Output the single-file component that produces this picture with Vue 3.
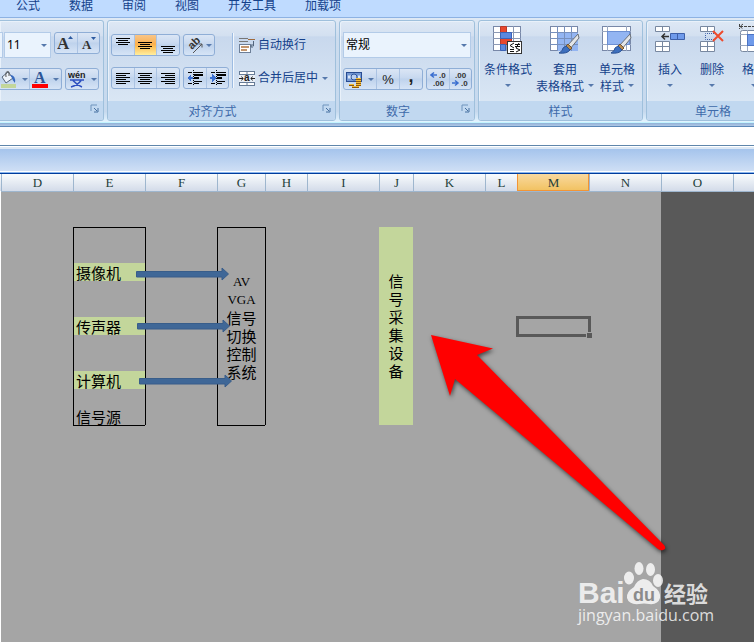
<script setup>
import { ref } from 'vue'

const tabs = ['公式', '数据', '审阅', '视图', '开发工具', '加载项']

const vertical = [
  { name: '顶端对齐', top: 2 },
  { name: '垂直居中', top: 6 },
  { name: '底端对齐', top: 10 }
]
const horizontal = [
  { name: '文本左对齐', shift: 0 },
  { name: '居中', shift: 2 },
  { name: '文本右对齐', shift: 4 }
]
const activeVertical = ref('垂直居中')
const size = ref('11')
const format = ref('常规')

const columns = ['C', 'D', 'E', 'F', 'G', 'H', 'I', 'J', 'K', 'L', 'M', 'N', 'O', 'P']
const rows = Array.from({ length: 26 }, (_, i) => i)
const sources = { 4: '摄像机', 7: '传声器', 10: '计算机', 12: '信号源' }
const merged = {
  G: ['AV', 'VGA', '信号', '切换', '控制', '系统'],
  J: ['信', '号', '采', '集', '设', '备']
}
const selected = { col: 'M', row: 7 }
const first = 2
const last = 12

const inBlock = (r) => r >= first && r <= last
const shown = (c, r) => !(merged[c] && r > first && r <= last)
const isMerged = (c, r) => !!merged[c] && r === first

function cellClass(c, r) {
  return {
    edge: c === 'C',
    dark: c === 'O' || c === 'P',
    'line-left': inBlock(r) && ['E', 'F', 'G', 'H'].includes(c),
    'line-top': (r === first || r === last + 1) && ['E', 'G'].includes(c),
    green: (c === 'E' && sources[r] && r !== 12) || (c === 'J' && r === first),
    'head-line': r === 0 && c !== 'C'
  }
}

const flows = [
  { x: 136, y: 100 },
  { x: 137, y: 152 },
  { x: 139, y: 207 }
]
</script>

<template>
  <div class="app">
    <nav class="tabs">
      <a v-for="t in tabs" :key="t" href="#">{{ t }}</a>
    </nav>

    <div class="ribbon">
      <section class="group font-group">
        <div class="body">
          <div class="line top">
            <span class="stub"></span>
            <label class="combo size">
              <select v-model="size" aria-label="字号"><option>11</option><option>12</option></select>
              <i class="caret"></i>
            </label>
            <div class="buttons">
              <button aria-label="增大字号">
                <svg width="18" height="18"><text x="0" y="15" class="serif" font-size="17">A</text><path d="M11 5 L13.500 2 L16 5Z" fill="#2d5aa0" /></svg>
              </button>
              <button aria-label="减小字号">
                <svg width="18" height="18"><text x="2" y="15" class="serif" font-size="13">A</text><path d="M11 3 L16 3 L13.500 6Z" fill="#2d5aa0" /></svg>
              </button>
            </div>
          </div>
          <div class="line">
            <div class="buttons open">
              <button class="wide fill" aria-label="填充颜色">
                <svg width="16" height="18">
                  <path d="M1 7 L7 2 L12 8 L5 13Z" fill="#eef3fa" stroke="#556579" />
                  <path d="M5 7 Q4 0 8 2 L8 6" fill="none" stroke="#555" />
                  <path d="M9 5 Q15 5 14 13 Q11 10 11 8Z" fill="#376abf" />
                  <rect x="0" y="14" width="15" height="4" fill="#c3d69b" />
                </svg>
                <i class="caret"></i>
              </button>
              <button class="wide" aria-label="字体颜色">
                <svg width="16" height="18"><text x="2" y="13" class="serif blue" font-size="16">A</text><rect x="0" y="14" width="16" height="4" fill="#f00" /></svg>
                <i class="caret"></i>
              </button>
            </div>
            <div class="buttons">
              <button class="wide" aria-label="拼音">
                <svg width="18" height="18">
                  <text x="0" y="8" font-family="Liberation Sans" font-weight="bold" font-size="9" fill="#222">wén</text>
                  <path d="M2 10 H16 M5 10.500 Q9 15 14 17 M13 10.500 Q10 15 3 17" fill="none" stroke="#2c4fc0" stroke-width="1.500" />
                </svg>
                <i class="caret"></i>
              </button>
            </div>
          </div>
        </div>
        <footer><span></span><svg class="launch" width="9" height="9"><path d="M1 7 V1 H7" fill="none" stroke="#6f94bd" /><path d="M4 4 L7 7 M8 4 V8 H4" fill="none" stroke="#456f9f" /></svg></footer>
      </section>

      <section class="group align-group">
        <div class="body sides">
          <div class="stack">
            <div class="line">
              <div class="buttons">
                <button v-for="v in vertical" :key="v.name" :aria-label="v.name" :class="{ active: v.name === activeVertical }" @click="activeVertical = v.name">
                  <svg width="15" height="18" class="crisp">
                    <rect v-for="n in 4" :key="n" :x="n % 2 ? 0 : 2" :y="v.top + n * 2 - 2" :width="n % 2 ? 14 : 10" height="1" />
                  </svg>
                </button>
              </div>
              <div class="buttons">
                <button class="wide slim" aria-label="方向">
                  <svg width="17" height="18">
                    <text transform="translate(5 14) rotate(-45)" font-family="Liberation Sans" font-weight="bold" font-size="11" fill="#333">ab</text>
                    <path d="M6 17 L15 8 M11.500 8 H15 V11.500" fill="none" stroke="#555" />
                  </svg>
                  <i class="caret"></i>
                </button>
              </div>
            </div>
            <div class="line">
              <div class="buttons">
                <button v-for="h in horizontal" :key="h.name" :aria-label="h.name">
                  <svg width="15" height="13" class="crisp">
                    <rect v-for="n in 6" :key="n" :x="n % 2 ? 0 : h.shift" :y="n * 2 - 1" :width="n % 2 ? 14 : 10" height="1" />
                  </svg>
                </button>
              </div>
              <div class="buttons">
                <button v-for="d in ['减少缩进量', '增加缩进量']" :key="d" :aria-label="d">
                  <svg width="16" height="16" class="crisp">
                    <path d="M1 2.500 H5 M7 2.500 H16 M7 5.500 H16 M7 8.500 H12 M7 11.500 H15 M1 13.500 H5 M7 13.500 H12" stroke="#000" />
                    <path d="M7 5 H16 M7 8 H12" stroke="#000" stroke-width="2" />
                    <path d="M6.500 0 V16" stroke="#000" stroke-dasharray="1 1" />
                    <path v-if="d[0] === '减'" d="M0 8 L4 4 V7 H6 V9 H4 V12Z" fill="#3b6fd0" />
                    <path v-else d="M6 8 L2 4 V7 H0 V9 H2 V12Z" fill="#3b6fd0" />
                  </svg>
                </button>
              </div>
            </div>
          </div>
          <div class="rule"></div>
          <div class="stack texts">
            <button class="plain">
              <svg width="16" height="16">
                <path d="M0 1.500 H9 M0 4.500 H9" stroke="#777" />
                <path d="M9 2.500 H16" stroke="#a06a3c" />
                <rect x="0.500" y="7.500" width="11" height="8" fill="#fff" stroke="#6d7f98" />
                <path d="M2 10 H10 M2 13 H8" stroke="#b07440" stroke-width="1.500" />
                <path d="M14.500 4 V9 H12 M13.500 7 L11.500 9 L13.500 11" fill="none" stroke="#52657d" />
              </svg>
              <span>自动换行</span>
            </button>
            <button class="plain">
              <svg width="16" height="15">
                <rect x="0.500" y="0.500" width="15" height="14" fill="#fff" stroke="#667b96" />
                <path d="M8 0 V4 M8 11 V15 M0 3.500 H16 M0 11.500 H16" stroke="#667b96" />
                <rect x="0" y="4" width="16" height="7" fill="#e8edf5" />
                <text x="5" y="10" font-family="Liberation Sans" font-weight="bold" font-size="10" fill="#222">a</text>
                <path d="M0 7.500 H4 M2.500 5.500 L4 7.500 L2.500 9.500 M16 7.500 H12 M13.500 5.500 L12 7.500 L13.500 9.500" fill="none" stroke="#222" />
              </svg>
              <span>合并后居中</span><i class="caret"></i>
            </button>
          </div>
        </div>
        <footer><span>对齐方式</span><svg class="launch" width="9" height="9"><path d="M1 7 V1 H7" fill="none" stroke="#6f94bd" /><path d="M4 4 L7 7 M8 4 V8 H4" fill="none" stroke="#456f9f" /></svg></footer>
      </section>

      <section class="group number-group">
        <div class="body">
          <div class="line top">
            <label class="combo">
              <select v-model="format" aria-label="数字格式"><option>常规</option><option>数值</option></select>
              <i class="caret"></i>
            </label>
          </div>
          <div class="line">
            <div class="buttons">
              <button class="wide" aria-label="会计数字格式">
                <svg width="17" height="17">
                  <rect x="0.500" y="1.500" width="15" height="9" fill="#7398d4" stroke="#284c91" />
                  <path d="M2 6 H5 M12 6 H14" stroke="#dce8fa" stroke-width="3" />
                  <circle cx="8" cy="6" r="3" fill="#b9cff0" stroke="#31569c" />
                  <path d="M10 8 H15 M10 10 H15 M10 12 H15 M10 14 H15 M3 14 H8 M6 16 H13" stroke="#8c5a10" stroke-width="2" />
                  <path d="M10 7.500 H15 M10 9.500 H15 M10 11.500 H15 M10 13.500 H15 M3 13.500 H8 M6 15.500 H13" stroke="#f4bd35" />
                </svg>
                <i class="caret"></i>
              </button>
              <button class="glyph">%</button>
              <button class="glyph comma">,</button>
            </div>
            <div class="buttons">
              <button aria-label="增加小数位数">
                <svg width="17" height="16" class="digits"><text x="9" y="7">.0</text><text x="3" y="15">.00</text><path d="M7 4 H1 M4 1.500 L1 4 L4 6.500" fill="none" stroke="#3b6fd0" stroke-width="1.500" /></svg>
              </button>
              <button aria-label="减少小数位数">
                <svg width="17" height="16" class="digits"><text x="3" y="7">.00</text><text x="9" y="15">.0</text><path d="M0 12 H6 M3 9.500 L6 12 L3 14.500" fill="none" stroke="#3b6fd0" stroke-width="1.500" /></svg>
              </button>
            </div>
          </div>
        </div>
        <footer><span>数字</span><svg class="launch" width="9" height="9"><path d="M1 7 V1 H7" fill="none" stroke="#6f94bd" /><path d="M4 4 L7 7 M8 4 V8 H4" fill="none" stroke="#456f9f" /></svg></footer>
      </section>

      <section class="group style-group">
        <div class="body bigs">
          <button class="big">
            <svg width="30" height="29">
              <rect x="0.500" y="0.500" width="27" height="24" fill="#fff" stroke="#7888a8" />
              <path d="M7.500 0 V25 M13.500 0 V25 M20.500 0 V25 M0 6.500 H28 M0 12.500 H28 M0 18.500 H28" stroke="#8b99b5" />
              <path d="M7.500 0.500 H13.500 V6.500 H7.500Z M7.500 12.500 H18.500 V18.500 H7.500Z" fill="#e8482e" stroke="#b93a2a" />
              <path d="M7.500 6.500 H18.500 V12.500 H7.500Z M7.500 18.500 H12.500 V24.500 H7.500Z" fill="#5b88e0" stroke="#3a62b8" />
              <rect x="14.500" y="15.500" width="14" height="12" fill="#fff" stroke="#333" />
              <path d="M21 17 L17 19.500 L21 22 M17 23.500 H21 M17 25.500 H21 M22 18.500 H27 M22 20.500 H27 M26 17 L23 22 M23 22 L27 24 L23 26" fill="none" stroke="#111" />
            </svg>
            <span>条件格式</span><span class="sub"><i class="caret"></i></span>
          </button>
          <button class="big">
            <svg width="30" height="29">
              <rect x="0.500" y="0.500" width="27" height="24" fill="#fff" stroke="#7888a8" />
              <rect x="7" y="6" width="21" height="19" fill="#93b5f2" />
              <path d="M7.500 0 V25 M14.500 0 V25 M21.500 0 V25 M0 6.500 H28 M0 12.500 H28 M0 18.500 H28" stroke="#7790bd" />
              <path d="M28 8 L29 12 L20 23 L17 20Z" fill="#e3e5e8" stroke="#6a7077" />
              <path d="M18 18 L22 22 L20 24 L16 20Z" fill="#b78b50" stroke="#725432" />
              <path d="M16 20 L20 24 Q17 28 9 27 Q13 25 13 22Z" fill="#3d6fbe" stroke="#2b5295" />
            </svg>
            <span>套用</span><span class="sub">表格格式<i class="caret"></i></span>
          </button>
          <button class="big">
            <svg width="30" height="29">
              <rect x="0.500" y="0.500" width="28" height="24" fill="#fff" stroke="#7888a8" />
              <path d="M5.500 0 V25 M24.500 0 V25 M0 5.500 H29 M0 18.500 H29" stroke="#9aa8c0" />
              <rect x="5.500" y="5.500" width="22" height="13" fill="#93b5f2" stroke="#6c8fd2" />
              <path d="M28 8 L29 12 L20 23 L17 20Z" fill="#e3e5e8" stroke="#6a7077" />
              <path d="M18 18 L22 22 L20 24 L16 20Z" fill="#b78b50" stroke="#725432" />
              <path d="M16 20 L20 24 Q17 28 9 27 Q13 25 13 22Z" fill="#3d6fbe" stroke="#2b5295" />
            </svg>
            <span>单元格</span><span class="sub">样式<i class="caret"></i></span>
          </button>
        </div>
        <footer class="centered"><span>样式</span></footer>
      </section>

      <section class="group cell-group">
        <div class="body bigs">
          <button class="big">
            <svg width="30" height="29">
              <path d="M0.500 0.500 H14.500 V5.500 H0.500Z M0.500 15.500 H14.500 V25.500 H0.500Z M7.500 0 V6 M7.500 15 V26 M0 20.500 H15" fill="#fff" stroke="#7888a0" />
              <path d="M15.500 7.500 H29.500 V13.500 H15.500Z M22.500 7 V14" fill="#6f9aea" stroke="#3e60a8" />
              <path d="M14 10.500 H7 M10 7.500 L7 10.500 L10 13.500" fill="none" stroke="#333" stroke-width="1.500" />
            </svg>
            <span>插入</span><span class="sub"><i class="caret"></i></span>
          </button>
          <button class="big">
            <svg width="30" height="29">
              <path d="M3.500 0.500 H17.500 V5.500 H3.500Z M3.500 15.500 H17.500 V25.500 H3.500Z M10.500 0 V6 M10.500 15 V26 M3 20.500 H18" fill="#fff" stroke="#7888a0" />
              <path d="M17 7.500 H8.500 V13.500 H17" fill="none" stroke="#3e60a8" stroke-dasharray="1 1" />
              <path d="M16 5 L26 15 M26 5 L16 15" stroke="#ee4b2d" stroke-width="2" />
            </svg>
            <span>删除</span><span class="sub"><i class="caret"></i></span>
          </button>
          <button class="big">
            <svg width="30" height="29">
              <path d="M0.500 -2 V3 M29.500 -2 V3 M1 0.500 H29 M4 -2 L1 0.500 L4 3" fill="none" stroke="#444" stroke-dasharray="3 1" />
              <rect x="1.500" y="4.500" width="27" height="21" rx="2" fill="#fff" stroke="#7888a0" />
              <path d="M8.500 4 V26 M21.500 4 V26 M1 8.500 H29 M1 19.500 H29" stroke="#9aa8c0" />
              <rect x="8.500" y="8.500" width="13" height="11" fill="#6f9aea" stroke="#4c74c4" />
            </svg>
            <span>格式</span><span class="sub"><i class="caret"></i></span>
          </button>
        </div>
        <footer class="centered"><span>单元格</span></footer>
      </section>
    </div>

    <div class="divider"></div>
    <input class="formula" type="text" aria-label="编辑栏" />
    <div class="titlebar"></div>

    <main class="sheet">
      <table>
        <colgroup><col v-for="c in columns" :key="c" :class="'col-' + c" /></colgroup>
        <thead>
          <tr><th v-for="c in columns" :key="c" :class="{ current: c === selected.col, edge: c === 'C' }"><template v-if="c !== 'C' && c !== 'P'">{{ c }}</template></th></tr>
        </thead>
        <tbody>
          <tr v-for="r in rows" :key="r">
            <template v-for="c in columns" :key="c">
              <td v-if="shown(c, r)" :class="cellClass(c, r)" :rowspan="isMerged(c, r) ? 11 : 1">
                <div v-if="isMerged(c, r)" class="merged"><span v-for="t in merged[c]" :key="t" :class="{ latin: t < 'a' }">{{ t }}</span></div>
                <template v-else-if="c === 'E' && sources[r]">{{ sources[r] }}</template>
                <div v-else-if="c === selected.col && r === selected.row" class="selection"><i></i></div>
              </td>
            </template>
          </tr>
        </tbody>
      </table>

      <svg class="shapes" width="754" height="468" viewBox="0 0 754 468" aria-hidden="true">
        <g v-for="f in flows" :key="f.y" :transform="`translate(${f.x} ${f.y})`">
          <path d="M0.500 -2.500 H86 V-6 L92.500 0 L86 6 V3 H0.500Z" fill="#3f6797" stroke="#385d8a" />
        </g>
        <path class="pointer" d="M431 161 L493 174.500 L477 181 L664 371 Q667 375 663 376 Q661 377 658 375 L455 205 L450 222Z" fill="#f00" />
      </svg>

      <svg class="watermark" width="150" height="84" viewBox="0 0 150 84">
        <g fill="#fff" fill-opacity="0.8">
          <text x="4" y="45" font-family="Liberation Sans" font-weight="bold" font-size="30">Bai</text>
          <ellipse cx="55" cy="20" rx="5" ry="6.500" />
          <ellipse cx="65" cy="10.500" rx="4.500" ry="6.500" />
          <ellipse cx="76.500" cy="11.500" rx="4.500" ry="6.500" />
          <ellipse cx="84" cy="22.500" rx="5" ry="6.500" />
          <path d="M69 21 Q76 21 79 28 Q87 33 86 40 Q84 47 75 46 Q70 45 65 46 Q55 47 53 40 Q52 34 60 29 Q63 22 69 21Z" />
          <text x="90" y="44" font-family="Noto Sans CJK SC" font-weight="bold" font-size="22">经验</text>
          <text x="4" y="63" font-family="Open Sans" font-size="16">jingyan.baidu.com</text>
        </g>
        <text x="59" y="43" font-family="Liberation Sans" font-weight="bold" font-size="18" fill="#8b8b8b">du</text>
      </svg>
    </main>
  </div>
</template>

<style>
body {
  background: #a5a5a5;
}
</style>

<style scoped>
.app {
  font-family: 'Noto Sans CJK SC', sans-serif;
  font-size: 12px;
  color: #15428b;
  overflow: hidden;
}
.tabs {
  display: flex;
  gap: 29px;
  height: 17px;
  padding-left: 16px;
  background: #bfdbff;
  border-bottom: 1px solid #8db2e3;
  line-height: 10px;
}
.tabs a {
  color: #15428b;
  text-decoration: none;
  white-space: nowrap;
}
.ribbon {
  display: flex;
  gap: 3px;
  height: 102px;
  padding-top: 2px;
  background: linear-gradient(#dfe9f5, #ccdcee 20%, #c6d9ee 90%, #e2f4ff);
  border-bottom: 1px solid #c2f4ff;
}
.group {
  display: flex;
  flex-direction: column;
  flex: none;
  box-sizing: border-box;
  height: 101px;
  border: 1px solid #9fc0dc;
  border-radius: 3px;
  background: linear-gradient(#dee8f5, #d3e0f0 15%, #c8d8ed 16%, #d9e6f4 80%);
  box-shadow: inset 1px 1px 0 #e9f1fa;
  overflow: hidden;
}
.font-group {
  width: 104px;
  border-left: 0;
  border-radius: 0 3px 3px 0;
}
.align-group {
  width: 229px;
}
.number-group {
  width: 136px;
}
.style-group {
  width: 165px;
}
.cell-group {
  width: 134px;
}
.body {
  display: flex;
  flex-direction: column;
  gap: 10px;
  flex: 1;
  padding: 11px 3px 0;
}
.font-group .body {
  padding-left: 0;
}
.sides {
  flex-direction: row;
  gap: 3px;
  padding-top: 13px;
}
.stack {
  display: flex;
  flex-direction: column;
  gap: 11px;
}
.line {
  display: flex;
  gap: 3px;
}
.line.top {
  height: 26px;
}
footer {
  display: flex;
  align-items: center;
  flex: none;
  height: 19px;
  padding-right: 4px;
  background: #c1d8f0;
  color: #3e6aaa;
}
footer span {
  flex: 1;
  padding-right: 5px;
  text-align: center;
}
footer.centered,
footer.centered span {
  padding: 0;
}
footer svg {
  flex: none;
  margin-bottom: 4px;
}
button {
  font: inherit;
  color: inherit;
  border: 0;
  padding: 0;
  background: none;
  white-space: nowrap;
}
.buttons {
  display: flex;
  box-sizing: border-box;
  height: 22px;
  border: 1px solid #8faed6;
  border-radius: 3px;
  background: linear-gradient(#dbe6f5, #c7d8ef 45%, #bed2ec 50%, #d6e4f6);
}
.buttons.open {
  border-left: 0;
  border-radius: 0 3px 3px 0;
}
.buttons button {
  display: flex;
  align-items: center;
  justify-content: center;
  width: 22px;
}
.buttons svg {
  flex: none;
}
.buttons button + button {
  border-left: 1px solid #abc3e3;
}
.align-group .buttons button:nth-child(3) {
  width: 23px;
}
.buttons .wide {
  gap: 5px;
  width: 32px;
}
.buttons .wide.fill {
  width: 29px;
}
.buttons .slim {
  gap: 2px;
  width: 30px;
}
.buttons .active {
  background: linear-gradient(#f8c588, #fbb04e 45%, #fdc15a 60%, #ffee9f);
}
.glyph {
  font-family: 'Liberation Sans', sans-serif;
  font-size: 13px;
  color: #222;
}
.comma {
  padding-bottom: 6px;
  font-weight: bold;
  font-size: 18px;
  line-height: 8px;
}
.number-group .line .glyph {
  width: 23px;
}
.caret {
  flex: none;
  width: 0;
  height: 0;
  border: 3px solid transparent;
  border-top-color: #5679ac;
  border-bottom: 0;
}
.stub {
  width: 3px;
  border: 1px solid #b3cbe8;
  border-left: 0;
  background: #eaf3fd;
}
.line .stub {
  margin-right: -2px;
}
.combo {
  display: grid;
  flex: 1;
  align-items: center;
}
.combo.size {
  flex: none;
  width: 47px;
}
.combo > * {
  grid-area: 1 / 1;
}
.combo .caret {
  justify-self: end;
  margin-right: 4px;
  pointer-events: none;
}
select {
  appearance: none;
  width: 100%;
  height: 26px;
  padding: 0 2px 2px;
  border: 1px solid #b3cbe8;
  border-radius: 0;
  background: #eaf3fd;
  font-family: 'Noto Sans', 'Noto Sans CJK SC', sans-serif;
  font-size: 12px;
  color: #000;
}
.rule {
  width: 1px;
  height: 55px;
  margin-top: -1px;
  background: #9dbce2;
  box-shadow: 1px 0 #f2f7fd;
}
.texts {
  padding-left: 3px;
}
.plain {
  display: flex;
  align-items: center;
  gap: 3px;
  height: 22px;
}
.plain span {
  line-height: 16px;
  padding-bottom: 2px;
}
.plain .caret {
  margin-left: 1px;
}
.bigs {
  flex-direction: row;
  gap: 2px;
  padding-top: 5px;
}
.big {
  display: flex;
  flex-direction: column;
  align-items: center;
  width: 52px;
  line-height: 17px;
}
.big svg {
  flex: none;
  height: 34px;
  overflow: visible;
}
.style-group .big:nth-child(2) {
  width: 58px;
}
.style-group .big:nth-child(3) {
  width: 42px;
}
.cell-group .big {
  width: 40px;
}
.big .sub {
  display: flex;
  align-items: center;
  gap: 4px;
  height: 17px;
}
.divider {
  height: 3px;
  background: linear-gradient(#8fb0d6, #b0c8e6);
  border-bottom: 1px solid #5b88b8;
}
.formula {
  display: block;
  box-sizing: border-box;
  width: 100%;
  height: 19px;
  border: 0;
  border-bottom: 1px solid #5f86ab;
  background: #fff;
  outline: 0;
}
.titlebar {
  box-sizing: border-box;
  height: 28px;
  border-top: 1px solid #fff;
  border-bottom: 1px solid #003c9c;
  background: linear-gradient(#dce8f5 0 2px, #a5c4ec 2px, #cfdff5 24px, #fff 24px 25px, #8ab6ee 25px);
}
.sheet {
  position: relative;
  overflow: hidden;
}
table {
  width: 100%;
  table-layout: fixed;
  border-spacing: 0;
  background: #a5a5a5;
}
col {
  width: 72px;
}
.col-C {
  width: 1px;
}
.col-G {
  width: 48px;
}
.col-H {
  width: 42px;
}
.col-J {
  width: 34px;
}
.col-L {
  width: 32px;
}
.col-P {
  width: auto;
}
th,
td {
  box-sizing: border-box;
  padding: 0;
  color: #000;
}
th {
  height: 17px;
  border-left: 1px solid #9eb6ce;
  background: linear-gradient(#f9fcfd, #d3dbe9);
  font: 13px/16px 'Liberation Serif', serif;
  color: #243f3a;
}
th.edge {
  border: 0;
}
th.current {
  background: linear-gradient(#f9d99f, #f1c15f);
  border-left-color: #f29536;
  box-shadow: inset -1px -1px #f29536;
}
td {
  position: relative;
  height: 18px;
  font-size: 15px;
  line-height: 17px;
  white-space: nowrap;
}
td.edge {
  background: #fff;
}
td.dark {
  background: #595959;
}
td.head-line {
  border-top: 1px solid #9eb6ce;
}
td.green {
  background: #c3d69b;
}
td.line-left {
  border-left: 1px solid #000;
  padding-left: 2px;
}
td.line-top {
  border-top: 1px solid #000;
}
td .merged {
  display: flex;
  flex-direction: column;
  align-items: center;
  line-height: 18px;
}
.merged .latin {
  font-family: 'Liberation Serif', serif;
  font-size: 13px;
}
td.line-left:has(.merged) {
  padding: 0;
}
.selection {
  position: absolute;
  inset: -1px -2px -2px -1px;
  border: 3px solid #595959;
}
.selection i {
  position: absolute;
  right: -4px;
  bottom: -4px;
  width: 5px;
  height: 5px;
  background: #595959;
  border: solid #a5a5a5;
  border-width: 1px 0 0 1px;
}
.shapes {
  position: absolute;
  left: 0;
  top: 0;
  pointer-events: none;
}
.pointer {
  filter: drop-shadow(1px 2px 2px rgba(0, 0, 0, 0.6));
}
.watermark {
  position: absolute;
  left: 574px;
  top: 384px;
}
.crisp {
  shape-rendering: crispEdges;
}
.serif {
  font-family: 'Liberation Serif', serif;
  font-weight: bold;
  fill: #333;
}
.serif.blue {
  fill: #2c5596;
}
.digits text {
  font-family: 'Liberation Sans', sans-serif;
  font-weight: bold;
  font-size: 8px;
  fill: #333;
}
</style>
